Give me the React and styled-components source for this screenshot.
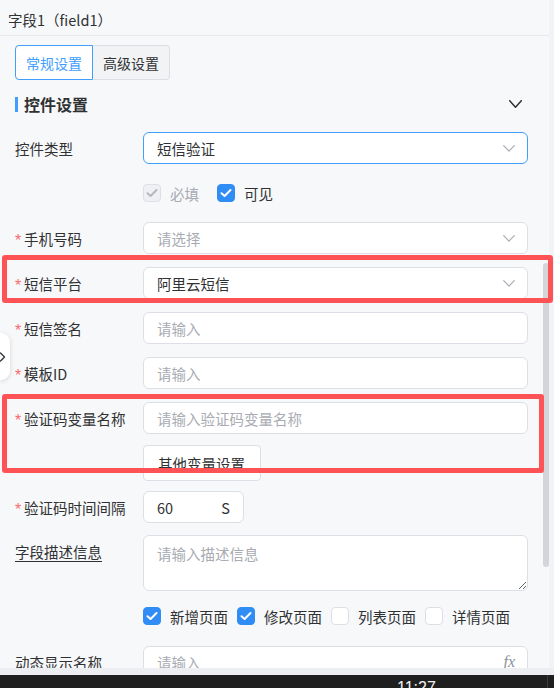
import React from "react";
import styled, { createGlobalStyle, css } from "styled-components";

const GlobalStyle = createGlobalStyle`
  * { box-sizing: border-box; }
  html, body { margin: 0; padding: 0; background: #f7f8fa; }
  body {
    font-family: "Noto Sans CJK SC", "Noto Sans", sans-serif;
    color: #303133;
    overflow: hidden;
  }
`;

const Screen = styled.div`
  position: relative;
  width: 554px;
  height: 688px;
  display: flex;
  flex-direction: column;
  overflow: hidden;
  background: #f7f8fa;
`;

const Window = styled.div`
  height: 668px;
  flex-shrink: 0;
  display: flex;
  overflow: hidden;
`;

const Panel = styled.div`
  width: 549px;
  display: flex;
  flex-direction: column;
`;

const EdgeStrip = styled.div`
  flex: 1;
  background: #f2f3f6;
`;

const Header = styled.div`
  height: 36px;
  flex-shrink: 0;
  padding: 4px 0 0 8px;
  display: flex;
  align-items: center;
  border-bottom: 1px solid #e6e8eb;
  font-size: 14.5px;
  color: #303133;
`;

const Body = styled.div`
  flex: 1;
  display: flex;
  overflow: hidden;
`;

const Content = styled.div`
  flex: 1;
  padding: 9px 15px 0 15px;
  display: flex;
  flex-direction: column;
  & > * { flex-shrink: 0; }
`;

const ScrollTrack = styled.div`
  width: 6px;
  flex-shrink: 0;
`;

const ScrollThumb = styled.div`
  margin-top: 227px;
  height: 304px;
  border-radius: 3px;
  background: #d3d5db;
`;

const Tabs = styled.div`
  display: flex;
  align-self: flex-start;
`;

const Tab = styled.div`
  height: 35px;
  padding: 0 10px;
  display: flex;
  align-items: center;
  font-size: 14px;
  border: 1px solid #dcdfe6;
  background: #f2f3f5;
  color: #303133;
  &:first-child { border-radius: 4px 0 0 4px; }
  &:last-child { border-radius: 0 4px 4px 0; border-left: none; }
  ${(p) =>
    p.$active &&
    css`
      background: #ffffff;
      border-color: #409eff;
      color: #409eff;
    `}
`;

const SectionTitle = styled.div`
  margin-top: 12px;
  height: 24px;
  display: flex;
  align-items: center;
  padding-right: 6px;
`;

const TitleBar = styled.span`
  width: 3px;
  height: 15px;
  background: #409eff;
  margin-right: 6px;
`;

const TitleText = styled.span`
  flex: 1;
  font-size: 16px;
  font-weight: 700;
  color: #303133;
`;

const FormRow = styled.div`
  display: flex;
  margin-top: ${(p) => p.$gap}px;
`;

const Label = styled.div`
  width: 128px;
  height: 32px;
  flex-shrink: 0;
  display: flex;
  align-items: center;
  font-size: 14.5px;
  color: #303133;
  white-space: nowrap;
  ${(p) =>
    p.$underline &&
    css`
      text-decoration: underline;
      text-underline-offset: 3px;
    `}
`;

const Star = styled.span`
  width: 9px;
  margin-top: 5px;
  font-family: "Liberation Sans", sans-serif;
  font-size: 16px;
  line-height: 1;
  color: #f56c6c;
`;

const Control = styled.div`
  flex: 1;
  display: flex;
  flex-direction: column;
  align-items: flex-start;
`;

const Field = styled.div`
  width: ${(p) => (p.$width ? `${p.$width}px` : "100%")};
  height: 32px;
  padding: 0 12px 0 13px;
  display: flex;
  align-items: center;
  justify-content: space-between;
  background: #ffffff;
  border: 1px solid ${(p) => (p.$focus ? "#409eff" : "#dcdfe6")};
  border-radius: 6px;
  font-size: 14.5px;
`;

const Value = styled.span`
  color: ${(p) => (p.$placeholder ? "#a8abb2" : "#303133")};
`;

const Suffix = styled.span`
  color: #303133;
  padding-right: 1px;
`;

const Fx = styled.span`
  font-family: "Liberation Serif", serif;
  font-style: italic;
  font-size: 16px;
  color: #8a8f99;
`;

const TextArea = styled.textarea`
  width: 100%;
  height: 56px;
  padding: 7px 13px;
  border: 1px solid #dcdfe6;
  border-radius: 6px;
  background: #ffffff;
  font-family: "Noto Sans CJK SC", "Noto Sans", sans-serif;
  font-size: 14.5px;
  line-height: 22px;
  color: #303133;
  resize: vertical;
  outline: none;
  &::placeholder { color: #a8abb2; }
`;

const Button = styled.div`
  margin-top: 11px;
  height: 36px;
  padding: 0 15px 0 14px;
  display: flex;
  align-items: center;
  background: #ffffff;
  border: 1px solid #dcdfe6;
  border-radius: 4px;
  font-size: 14.5px;
  color: #303133;
`;

const CheckRow = styled.div`
  margin-top: ${(p) => p.$gap}px;
  height: 32px;
  padding-left: 128px;
  display: flex;
  align-items: center;
`;

const CheckItem = styled.label`
  display: flex;
  align-items: center;
  gap: 9px;
  margin-right: ${(p) => p.$space}px;
  font-size: 14.5px;
  color: ${(p) => (p.$disabled ? "#a8abb2" : "#303133")};
`;

const Box = styled.span`
  width: 18px;
  height: 18px;
  border-radius: 4px;
  display: flex;
  align-items: center;
  justify-content: center;
  border: 1px solid #dcdfe6;
  background: #ffffff;
  ${(p) =>
    p.$checked &&
    css`
      background: #2f8df5;
      border-color: #2f8df5;
    `}
  ${(p) =>
    p.$disabled &&
    css`
      background: #eef0f3;
      border-color: #dcdfe6;
    `}
`;

const SideTab = styled.div`
  position: absolute;
  left: 0;
  top: 333px;
  width: 10px;
  height: 47px;
  display: flex;
  align-items: center;
  background: #ffffff;
  border-radius: 0 9px 9px 0;
  box-shadow: 0 1px 5px rgba(0, 0, 0, 0.14);
`;

const Highlight = styled.div`
  position: absolute;
  left: ${(p) => p.$left}px;
  top: ${(p) => p.$top}px;
  width: ${(p) => p.$width}px;
  height: ${(p) => p.$height}px;
  border: 5px solid #fd5356;
  border-radius: 3px;
  pointer-events: none;
`;

const HStrip = styled.div`
  height: 7px;
  flex-shrink: 0;
  background: #eceef1;
`;

const Taskbar = styled.div`
  flex: 1;
  display: flex;
  background: #1f1f1f;
  overflow: hidden;
`;

const Clock = styled.div`
  margin-left: 397px;
  padding-top: 3px;
  font-family: "Liberation Sans", sans-serif;
  font-size: 16px;
  line-height: 20px;
  color: #f2f2f2;
`;

const TaskDivider = styled.div`
  margin-left: auto;
  margin-right: 6px;
  width: 1px;
  background: #3a3a3a;
`;

const Chevron = ({ color = "#a8abb2", w = 12, h = 7, sw = 1.2 }) => (
  <svg width={w} height={h} viewBox={`0 0 ${w} ${h}`} fill="none">
    <polyline
      points={`0.7,0.7 ${w / 2},${h - 0.8} ${w - 0.7},0.7`}
      stroke={color}
      strokeWidth={sw}
      strokeLinecap="round"
      strokeLinejoin="round"
    />
  </svg>
);

const Tick = ({ color = "#fff" }) => (
  <svg width="12" height="10" viewBox="0 0 12 10" fill="none">
    <polyline
      points="1.5,5.2 4.6,8 10.5,2"
      stroke={color}
      strokeWidth="2"
      strokeLinecap="round"
      strokeLinejoin="round"
    />
  </svg>
);

const Check = ({ label, checked, disabled, space = 9 }) => (
  <CheckItem $disabled={disabled} $space={space}>
    <Box $checked={checked} $disabled={disabled}>
      {checked && <Tick color={disabled ? "#b4b7bd" : "#ffffff"} />}
    </Box>
    {label}
  </CheckItem>
);

const FieldLabel = ({ required, underline, children }) => (
  <Label $underline={underline}>
    {required && <Star>*</Star>}
    <span>{children}</span>
  </Label>
);

const SelectField = ({ value, placeholder, focus }) => (
  <Field $focus={focus}>
    <Value $placeholder={!value}>{value || placeholder}</Value>
    <Chevron />
  </Field>
);

const InputField = ({ placeholder }) => (
  <Field>
    <Value $placeholder>{placeholder}</Value>
  </Field>
);

export default function App() {
  return (
    <>
      <GlobalStyle />
      <Screen>
        <Window>
          <Panel>
            <Header>字段1（field1）</Header>
            <Body>
              <Content>
                <Tabs>
                  <Tab $active>常规设置</Tab>
                  <Tab>高级设置</Tab>
                </Tabs>

                <SectionTitle>
                  <TitleBar />
                  <TitleText>控件设置</TitleText>
                  <Chevron color="#303133" w={13} h={8} sw={1.5} />
                </SectionTitle>

                <FormRow $gap={16}>
                  <FieldLabel>控件类型</FieldLabel>
                  <Control>
                    <SelectField value="短信验证" focus />
                  </Control>
                </FormRow>

                <CheckRow $gap={13}>
                  <Check label="必填" checked disabled space={18} />
                  <Check label="可见" checked />
                </CheckRow>

                <FormRow $gap={13}>
                  <FieldLabel required>手机号码</FieldLabel>
                  <Control>
                    <SelectField placeholder="请选择" />
                  </Control>
                </FormRow>

                <FormRow $gap={13}>
                  <FieldLabel required>短信平台</FieldLabel>
                  <Control>
                    <SelectField value="阿里云短信" />
                  </Control>
                </FormRow>

                <FormRow $gap={13}>
                  <FieldLabel required>短信签名</FieldLabel>
                  <Control>
                    <InputField placeholder="请输入" />
                  </Control>
                </FormRow>

                <FormRow $gap={13}>
                  <FieldLabel required>模板ID</FieldLabel>
                  <Control>
                    <InputField placeholder="请输入" />
                  </Control>
                </FormRow>

                <FormRow $gap={13}>
                  <FieldLabel required>验证码变量名称</FieldLabel>
                  <Control>
                    <InputField placeholder="请输入验证码变量名称" />
                    <Button>其他变量设置</Button>
                  </Control>
                </FormRow>

                <FormRow $gap={10}>
                  <FieldLabel required>验证码时间间隔</FieldLabel>
                  <Control>
                    <Field $width={101}>
                      <Value>60</Value>
                      <Suffix>S</Suffix>
                    </Field>
                  </Control>
                </FormRow>

                <FormRow $gap={12}>
                  <FieldLabel underline>字段描述信息</FieldLabel>
                  <Control>
                    <TextArea placeholder="请输入描述信息" />
                  </Control>
                </FormRow>

                <CheckRow $gap={9}>
                  <Check label="新增页面" checked />
                  <Check label="修改页面" checked />
                  <Check label="列表页面" />
                  <Check label="详情页面" />
                </CheckRow>

                <FormRow $gap={14}>
                  <FieldLabel>动态显示名称</FieldLabel>
                  <Control>
                    <Field>
                      <Value $placeholder>请输入</Value>
                      <Fx>fx</Fx>
                    </Field>
                  </Control>
                </FormRow>
              </Content>
              <ScrollTrack>
                <ScrollThumb />
              </ScrollTrack>
            </Body>
          </Panel>
          <EdgeStrip />
        </Window>
        <HStrip />
        <Taskbar>
          <Clock>11:27</Clock>
          <TaskDivider />
        </Taskbar>

        <SideTab>
          <svg width="6" height="10" viewBox="0 0 6 10" fill="none">
            <polyline
              points="0.5,1 4.5,5 0.5,9"
              stroke="#303133"
              strokeWidth="1.3"
              strokeLinecap="round"
              strokeLinejoin="round"
            />
          </svg>
        </SideTab>

        <Highlight $left={2} $top={255} $width={551} $height={48} />
        <Highlight $left={2} $top={394} $width={542} $height={79} />
      </Screen>
    </>
  );
}
